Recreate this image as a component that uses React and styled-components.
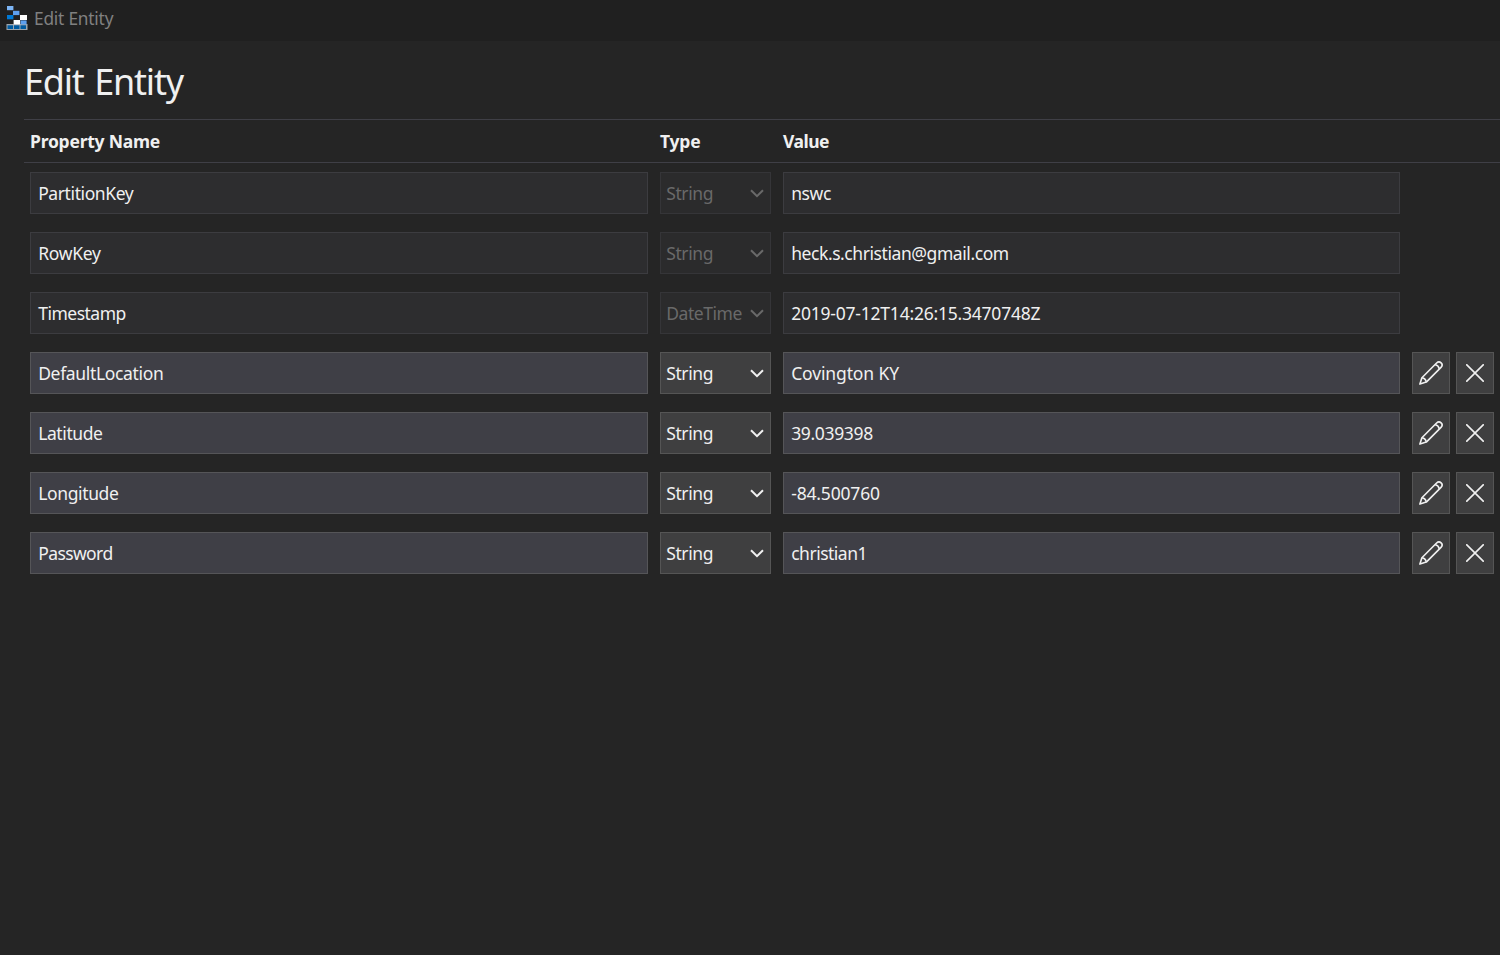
import React, { Component } from 'react';
import styled, { createGlobalStyle } from 'styled-components';

const GlobalStyle = createGlobalStyle`
  * {
    box-sizing: border-box;
  }
  body {
    margin:0;
    background:#252525;
    color:#f0f0f0;
    font-family:"Noto Sans", "Open Sans", sans-serif;
    font-size:17.5px;
    overflow:hidden;
  }
`

const Window = styled.div`
  height:955px;
  background:#252525;
`

const TitleBar = styled.div`
  display:flex;
  align-items:center;
  height:41px;
  padding:0 0 5px 6px;
  gap:6px;
  background:#202020;
  color:#808080;
`

const TitleText = styled.span`
  padding-top:1px;
  font-size:17.3px;
  line-height:24px;
  letter-spacing:-0.2px;
`

const Content = styled.div`
  padding-left:24px;
`

const Heading = styled.h1`
  margin:0;
  height:78px;
  padding-top:16px;
  font-size:36px;
  font-weight:400;
  line-height:50px;
  letter-spacing:-1.2px;
  word-spacing:2.4px;
`

const Row = styled.div`
  display:grid;
  grid-template-columns:630px 123px 629px 94px;
  height:60px;
  align-items:center;
`

const HeaderRow = styled(Row)`
  height:44px;
  border-top:1px solid #3f3f46;
  border-bottom:1px solid #3f3f46;
  font-weight:700;
`

const Cell = styled.div`
  display:flex;
  gap:6px;
  padding:0 6px;
`

const Label = styled.span`
  line-height:24px;
  letter-spacing:${props => props.$spacing || 0}px;
`

const Field = styled.div`
  display:flex;
  align-items:center;
  width:100%;
  height:42px;
  padding:0 7.2px;
  background:${props => props.$locked ? '#2d2d2f' : '#3f3f46'};
  border:1px solid ${props => props.$locked ? '#3c3c40' : '#555558'};
`

const TypeSelect = styled(Field)`
  justify-content:space-between;
  padding:0 6px 0 5.2px;
  background:${props => props.$locked ? '#2b2b2c' : '#3f3f40'};
  border-color:${props => props.$locked ? '#353538' : '#555555'};
  color:${props => props.$locked ? '#696969' : '#f0f0f0'};
`

const IconButton = styled.button`
  display:flex;
  align-items:center;
  justify-content:center;
  width:38px;
  height:42px;
  padding:0;
  background:#3f3f40;
  border:1px solid #555555;
  color:#f0f0f0;
`

const AppIcon = () => (
  <svg width="22" height="24" viewBox="0 0 22 24">
    <rect x="0.5" y="18" width="21" height="6" fill="#9fa6ac" />
    <rect x="1" y="0" width="6.4" height="4.2" fill="#7db5f5" />
    <rect x="7" y="4.8" width="6.4" height="4.3" fill="#5ea0ef" />
    <rect x="1" y="9" width="6.4" height="4.3" fill="#0078d4" />
    <rect x="14" y="9" width="7" height="5" fill="#ffffff" />
    <rect x="7.6" y="14" width="6.6" height="4.4" fill="#ffffff" />
    <rect x="14.6" y="14.4" width="6" height="4" fill="#5ea0ef" />
    <rect x="1.5" y="19.3" width="5.5" height="3.7" fill="#005ba1" />
    <rect x="8" y="19.3" width="5.5" height="3.7" fill="#005ba1" />
    <rect x="14.5" y="19.3" width="5.5" height="3.7" fill="#005ba1" />
  </svg>
)

const Chevron = () => (
  <svg width="14" height="9" viewBox="0 0 14 9" fill="none" stroke="currentColor" strokeWidth="2">
    <path d="M1 1.2L7 7.2L13 1.2" />
  </svg>
)

const PencilIcon = () => (
  <svg width="26" height="26" viewBox="0 0 26 26" fill="none" stroke="currentColor" strokeWidth="1.6" strokeLinejoin="round">
    <path d="M1.9 24.1L3.9 17.7L18.6 3C20 1.6 21.8 1.6 23.1 2.9C24.4 4.2 24.4 6 23 7.4L8.3 22.1Z" />
    <path d="M3.9 17.7C6.3 18 7.9 19.6 8.3 22.1M17 4.6C19.2 5.2 20.8 6.7 21.4 9" />
  </svg>
)

const CloseIcon = () => (
  <svg width="18" height="18" viewBox="0 0 18 18" fill="none" stroke="currentColor" strokeWidth="1.6">
    <path d="M0.2 0.2L17.8 17.8M17.8 0.2L0.2 17.8" />
  </svg>
)

const properties = [
  { name: "PartitionKey", type: "String", value: "nswc", locked: true, spacing: [-0.4, -0.4, -0.4] },
  { name: "RowKey", type: "String", value: "heck.s.christian@gmail.com", locked: true, spacing: [-0.3, -0.4, -0.43] },
  { name: "Timestamp", type: "DateTime", value: "2019-07-12T14:26:15.3470748Z", locked: true, spacing: [-0.5, -0.45, -0.22] },
  { name: "DefaultLocation", type: "String", value: "Covington KY", spacing: [-0.34, -0.4, -0.13] },
  { name: "Latitude", type: "String", value: "39.039398", spacing: [-0.4, -0.4, -0.35] },
  { name: "Longitude", type: "String", value: "-84.500760", spacing: [-0.37, -0.4, -0.17] },
  { name: "Password", type: "String", value: "christian1", spacing: [-0.6, -0.4, -0.5] }
]

class App extends Component {
  renderRow = (item) => {
    const [nameSpacing, typeSpacing, valueSpacing] = item.spacing;

    return (
      <Row key={item.name}>
        <Cell>
          <Field $locked={item.locked}><Label $spacing={nameSpacing}>{item.name}</Label></Field>
        </Cell>
        <Cell>
          <TypeSelect $locked={item.locked}>
            <Label $spacing={typeSpacing}>{item.type}</Label>
            <Chevron />
          </TypeSelect>
        </Cell>
        <Cell>
          <Field $locked={item.locked}><Label $spacing={valueSpacing}>{item.value}</Label></Field>
        </Cell>
        {!item.locked &&
          <Cell>
            <IconButton aria-label="Edit"><PencilIcon /></IconButton>
            <IconButton aria-label="Delete"><CloseIcon /></IconButton>
          </Cell>
        }
      </Row>
    );
  }

  render() {
    return (
      <Window>
        <GlobalStyle />
        <TitleBar>
          <AppIcon />
          <TitleText>Edit Entity</TitleText>
        </TitleBar>
        <Content>
          <Heading>Edit Entity</Heading>
          <HeaderRow>
            <Cell><Label $spacing={-0.23}>Property Name</Label></Cell>
            <Cell><Label $spacing={-0.2}>Type</Label></Cell>
            <Cell><Label $spacing={-0.5}>Value</Label></Cell>
          </HeaderRow>
          {properties.map(this.renderRow)}
        </Content>
      </Window>
    );
  }
}

export default App
